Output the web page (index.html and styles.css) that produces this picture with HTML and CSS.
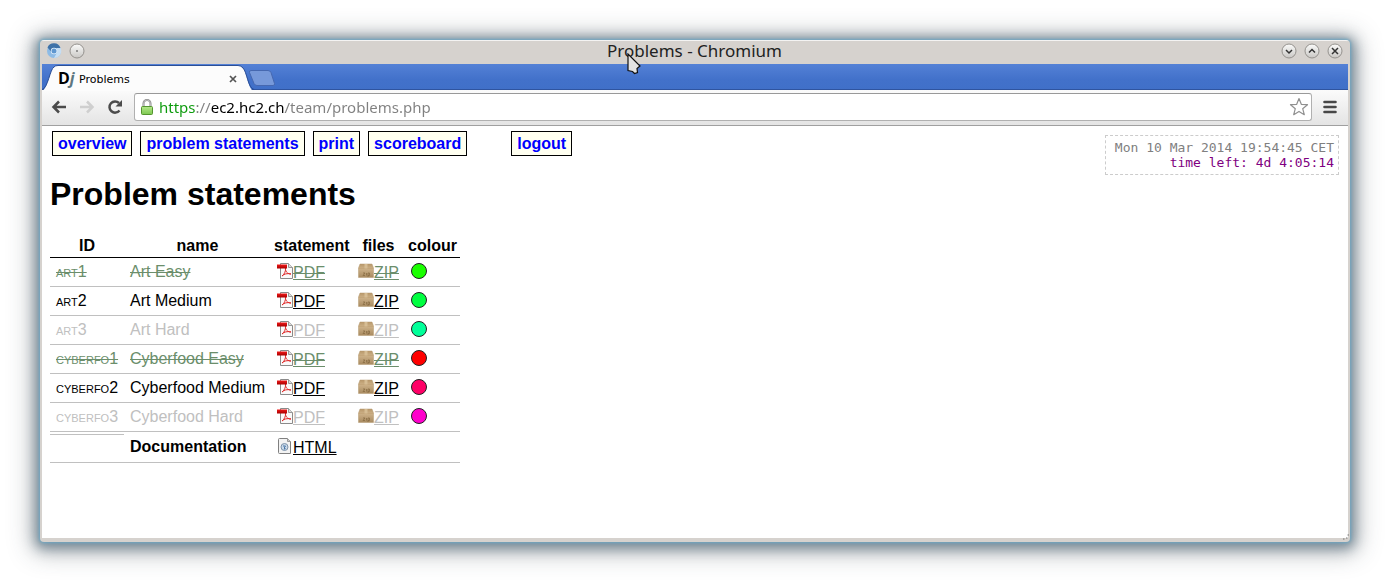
FILE: index.html
```html
<!DOCTYPE html>
<html lang="en">
<head>
<meta charset="utf-8">
<title>Problems</title>
<link rel="stylesheet" href="styles.css">
</head>
<body>
<svg class="defs" aria-hidden="true">
  <defs>
    <linearGradient id="knob" x1="0" y1="0" x2="0" y2="1"><stop offset="0" stop-color="#fbfbfa"/><stop offset="1" stop-color="#c9c7c4"/></linearGradient>
    <linearGradient id="red" x1="0" y1="0" x2="0" y2="1"><stop offset="0" stop-color="#f01818"/><stop offset="1" stop-color="#a80000"/></linearGradient>
    <linearGradient id="box" x1="0" y1="0" x2="0" y2="1"><stop offset="0" stop-color="#b8986a"/><stop offset=".35" stop-color="#cdb188"/><stop offset="1" stop-color="#a88a60"/></linearGradient>
    <linearGradient id="lock" x1="0" y1="0" x2="0" y2="1"><stop offset="0" stop-color="#b5e88a"/><stop offset="1" stop-color="#7cc850"/></linearGradient>
    <symbol id="pdf" viewBox="0 0 16 16">
      <path d="M3.500.5h8l4 4v11h-12z" fill="#fafafa" stroke="#8a8a8a"/>
      <path d="M11.500.5v4h4" fill="#ddd" stroke="#999"/>
      <path d="M5 13c2-1 4-5 3.500-8M8.500 7c1 3 3 4 5.500 4M5 13c2-2 5-3 9-2" fill="none" stroke="#e02a2a"/>
      <path d="M0 1.500h10v4H0z" fill="url(#red)"/>
    </symbol>
    <symbol id="zip" viewBox="0 0 16 16">
      <path d="M2 1h12l1.500 4v9.500H.500V5z" fill="url(#box)" stroke="#b59a70" stroke-width=".5"/>
      <path d="M.8 5.500h14.500" stroke="#c0a276" stroke-width=".7"/>
      <path d="M6.500 1h3v4.500h-3z" fill="#d6bd94"/>
      <path d="M5 10h2l-2 2.500h2M8.500 10v2.500M10 14v-4h1.500v2.500H10" fill="none" stroke="#84683f" stroke-width=".7"/>
    </symbol>
    <symbol id="html" viewBox="0 0 16 16">
      <path d="M2.500.5h8l3 3v12h-11q-1 0-1-1v-13q0-1 1-1z" fill="#f3f3f3" stroke="#808080"/>
      <path d="M10.500.5v3h3" fill="#ccc" stroke="#999"/>
      <circle cx="7.500" cy="9" r="3.500" fill="#c9d9ea" stroke="#7d93aa"/>
      <path d="M6 8h2.500L7.500 9.500l1 1M7.500 9v2.500" fill="none" stroke="#4a76a5"/>
    </symbol>
  </defs>
</svg>

<div class="window">
  <header class="titlebar">
    <div class="controls">
      <svg width="16" height="16" viewBox="0 0 16 16" aria-hidden="true"><circle cx="8" cy="8" r="7" fill="#8dbbe6"/><path d="M1.500 4.500A7 7 0 0 1 14.500 5H8a3 3 0 0 0-2.500 4z" fill="#3f72a8"/><path d="M14.600 5A7 7 0 0 1 8 15l3-5.500V5z" fill="#c5def4"/><circle cx="8" cy="8" r="3.200" fill="#e9f3fc"/><circle cx="8" cy="8" r="2.500" fill="#5f97d0"/></svg>
      <button class="knob" aria-label="On all desktops"><svg width="16" height="16" viewBox="0 0 16 16"><circle cx="8" cy="8" r="7" fill="url(#knob)" stroke="#95928e"/><circle cx="8" cy="8" r=".8" fill="#333"/></svg></button>
    </div>
    <div class="title">Problems - Chromium
      <svg class="pointer" width="14" height="22" viewBox="0 0 14 22" aria-hidden="true"><path d="M1 1v16.500l4.500 1 2 2 3-1-.500-4 3-2.500z" fill="#e4e4e4" stroke="#111" stroke-width="1.200"/></svg>
    </div>
    <div class="controls controls-right">
      <button class="knob" aria-label="Minimize"><svg width="16" height="16" viewBox="0 0 16 16"><circle cx="8" cy="8" r="7" fill="url(#knob)" stroke="#95928e"/><path d="M5 7l3 3 3-3" fill="none" stroke="#333" stroke-width="1.500"/></svg></button>
      <button class="knob" aria-label="Maximize"><svg width="16" height="16" viewBox="0 0 16 16"><circle cx="8" cy="8" r="7" fill="url(#knob)" stroke="#95928e"/><path d="M5 9.500l3-3 3 3" fill="none" stroke="#333" stroke-width="1.500"/></svg></button>
      <button class="knob" aria-label="Close"><svg width="16" height="16" viewBox="0 0 16 16"><circle cx="8" cy="8" r="7" fill="url(#knob)" stroke="#95928e"/><path d="M5 5l6 6M11 5l-6 6" stroke="#333" stroke-width="1.500"/></svg></button>
    </div>
  </header>

  <div class="tabs">
    <div class="tab">
      <svg class="tab-shape" width="212" height="26" viewBox="0 0 212 26" aria-hidden="true"><path d="M0 26C6 24 8 4 12 2Q13 .5 16 .5H196Q199 .5 201 3C205 7 206 25 212 26z" fill="#fcfcfc"/><path d="M0 24.500C6 23 8 4 12 2Q13 .5 16 .5H196Q199 .5 201 3C205 7 206 23 212 24.500" fill="none" stroke="#2c4f96"/></svg>
      <span class="favicon">D<i>j</i></span>
      <span class="tab-name">Problems</span>
      <button class="tab-close" aria-label="Close tab"><svg width="8" height="8" viewBox="0 0 8 8"><path d="M1 1l6 6M7 1L1 7" stroke="#555" stroke-width="1.700"/></svg></button>
    </div>
    <button class="new-tab" aria-label="New tab"><svg width="28" height="16" viewBox="0 0 28 16"><path d="M3 .5h17q2 0 3 2l3.500 11q.5 2-1.500 2H9q-2 0-3-2L1.500 2.500Q1 .5 3 .5z" fill="#7799da" stroke="#4668b0"/></svg></button>
  </div>

  <div class="toolbar">
    <button class="tool" aria-label="Back"><svg width="16" height="16" viewBox="0 0 16 16"><path d="M15 8H3M8 2.500L2.500 8 8 13.500" fill="none" stroke="#4b4b4b" stroke-width="2.500"/></svg></button>
    <button class="tool" aria-label="Forward" disabled><svg width="16" height="16" viewBox="0 0 16 16"><path d="M1 8h12M8 2.500L13.500 8 8 13.500" fill="none" stroke="#cfcfcf" stroke-width="2.500"/></svg></button>
    <button class="tool" aria-label="Reload"><svg width="16" height="16" viewBox="0 0 16 16"><path d="M12.500 11.500A5.600 5.600 0 1 1 12 4" fill="none" stroke="#4b4b4b" stroke-width="2.500"/><path d="M15 1v6.500H8.500z" fill="#4b4b4b"/></svg></button>
    <div class="address">
      <svg width="12" height="16" viewBox="0 0 12 16" aria-hidden="true"><path d="M2.500 8V4.500a3.500 3.500 0 0 1 7 0V8" fill="none" stroke="#888" stroke-width="2"/><path d="M2.500 8V4.500a3.500 3.500 0 0 1 7 0V8" fill="none" stroke="#ddd" stroke-width=".6"/><rect x=".5" y="7.500" width="11" height="8" rx="1" fill="url(#lock)" stroke="#54942f"/></svg>
      <input class="url" type="text" aria-label="Address" value="https://ec2.hc2.ch/team/problems.php">
      <button class="star" aria-label="Bookmark this page"><svg width="20" height="20" viewBox="0 0 20 20"><path d="M10 1.500l2.300 5.800 6.200.4-4.800 4 1.600 6L10 14.400l-5.300 3.300 1.600-6-4.800-4 6.200-.4z" fill="#fff" stroke="#909090" stroke-width="1.200" stroke-linejoin="round"/></svg></button>
    </div>
    <button class="tool menu" aria-label="Menu"><svg width="14" height="14" viewBox="0 0 14 14"><path d="M1.500 2h11M1.500 7h11M1.500 12h11" stroke="#484848" stroke-width="2.600" stroke-linecap="round"/></svg></button>
  </div>

  <main class="page">
    <div class="top">
      <nav class="nav">
        <a href="#">overview</a>
        <a href="#">problem statements</a>
        <a href="#">print</a>
        <a href="#">scoreboard</a>
        <a class="logout" href="#">logout</a>
      </nav>
      <div class="clock">Mon 10 Mar 2014 19:54:45 CET<br><span class="left">time left: 4d 4:05:14</span></div>
    </div>
    <h1>Problem statements</h1>
    <table class="problems">
      <colgroup><col class="c-id"><col class="c-name"><col class="c-statement"><col class="c-files"><col class="c-colour"></colgroup>
      <thead><tr><th>ID</th><th>name</th><th>statement</th><th>files</th><th>colour</th></tr></thead>
      <tbody>
        <tr class="solved"><td class="id">art1</td><td>Art Easy</td><td><svg class="icon"><use href="#pdf"/></svg><a href="#">PDF</a></td><td><svg class="icon"><use href="#zip"/></svg><a href="#">ZIP</a></td><td><span class="dot green"></span></td></tr>
        <tr><td class="id">art2</td><td>Art Medium</td><td><svg class="icon"><use href="#pdf"/></svg><a href="#">PDF</a></td><td><svg class="icon"><use href="#zip"/></svg><a href="#">ZIP</a></td><td><span class="dot emerald"></span></td></tr>
        <tr class="locked"><td class="id">art3</td><td>Art Hard</td><td><svg class="icon"><use href="#pdf"/></svg><a href="#">PDF</a></td><td><svg class="icon"><use href="#zip"/></svg><a href="#">ZIP</a></td><td><span class="dot mint"></span></td></tr>
        <tr class="solved"><td class="id">cyberfo1</td><td>Cyberfood Easy</td><td><svg class="icon"><use href="#pdf"/></svg><a href="#">PDF</a></td><td><svg class="icon"><use href="#zip"/></svg><a href="#">ZIP</a></td><td><span class="dot red"></span></td></tr>
        <tr><td class="id">cyberfo2</td><td>Cyberfood Medium</td><td><svg class="icon"><use href="#pdf"/></svg><a href="#">PDF</a></td><td><svg class="icon"><use href="#zip"/></svg><a href="#">ZIP</a></td><td><span class="dot rose"></span></td></tr>
        <tr class="locked"><td class="id">cyberfo3</td><td>Cyberfood Hard</td><td><svg class="icon"><use href="#pdf"/></svg><a href="#">PDF</a></td><td><svg class="icon"><use href="#zip"/></svg><a href="#">ZIP</a></td><td><span class="dot magenta"></span></td></tr>
        <tr class="docs"><td class="blank"><div class="rule"></div></td><td><b>Documentation</b></td><td><svg class="icon"><use href="#html"/></svg><a href="#">HTML</a></td><td></td><td></td></tr>
      </tbody>
    </table>
    <svg class="grip" width="8" height="8" viewBox="0 0 8 8" aria-hidden="true"><path d="M1 6h1.500M4 5h1.500M5.500 2H7" stroke="#777" stroke-width="1.200"/></svg>
  </main>
</div>
</body>
</html>
```
FILE: styles.css
```css
* { box-sizing: border-box; }

body {
  margin: 0;
  min-height: 100vh;
  padding: 40px;
  display: flex;
  background: #fff;
  font: 16px/18px "Liberation Sans", Arial, sans-serif;
  color: #000;
}

button {
  border: 0;
  padding: 0;
  background: none;
  display: flex;
}

.defs { position: absolute; width: 0; height: 0; }

.window {
  flex: 1;
  min-width: 0;
  display: flex;
  flex-direction: column;
  background: #d6d2ce;
  border: 2px solid #d6d2ce;
  border-top: 1px solid #f4f3f2;
  border-bottom-width: 4px;
  border-radius: 4px;
  box-shadow: 0 0 3px 1px #6ea8c5, 0 2px 12px 5px rgba(50, 80, 100, 0.5), 0 3px 24px 8px rgba(50, 60, 70, 0.35);
}

.titlebar {
  height: 23px;
  display: grid;
  grid-template-columns: 1fr auto 1fr;
  align-items: center;
  padding: 0 5px 0 4px;
}

.controls { display: flex; gap: 7px; padding-bottom: 4px; }
.controls-right { justify-content: flex-end; }

.title {
  position: relative;
  padding-bottom: 3px;
  font: 17px/20px "Noto Sans", "Open Sans", sans-serif;
  color: #222;
}

.pointer { position: absolute; left: 20px; top: 12px; }

.tabs {
  height: 26px;
  display: flex;
  align-items: flex-start;
  background: linear-gradient(#5481d6, #4271ca 60%, #4070c8);
  box-shadow: inset 0 -1px #2f549f;
}

.tab {
  position: relative;
  width: 212px;
  height: 26px;
  display: flex;
  align-items: center;
  padding: 2px 17px 0 16px;
}

.tab-shape { position: absolute; left: 0; top: 1px; }
.favicon, .tab-name, .tab-close { position: relative; }
.tab-close { padding-top: 2px; }
.favicon { width: 21px; font: bold 16px/20px "Open Sans", sans-serif; }
.favicon i { color: #5d7680; }
.tab-name { flex: 1; padding-top: 3px; font: 11px/16px "DejaVu Sans", sans-serif; }
.new-tab { padding-top: 6px; margin-left: -6px; }

.toolbar {
  height: 36px;
  display: flex;
  align-items: center;
  gap: 11px;
  padding: 0 11px 1px 9px;
  background: linear-gradient(#fbfbfb, #e4e4e4);
  border-bottom: 1px solid #a0a0a0;
}

.toolbar .tool + .tool { margin-left: 1px; }

.address {
  flex: 1;
  min-width: 0;
  height: 28px;
  display: flex;
  align-items: center;
  gap: 6px;
  padding: 0 2px 0 6px;
  background: #fff;
  border: 1px solid #b0b0b0;
  border-top-color: #999;
  border-radius: 3px;
}

.url {
  flex: 1;
  min-width: 0;
  border: 0;
  padding: 0;
  font: 15px/24px "Noto Sans", "Open Sans", sans-serif;
  color: transparent;
  background: linear-gradient(90deg, #0a9a0a 37px, #808080 37px, #808080 52px, #000 52px, #000 126px, #808080 126px);
  background-clip: text;
  -webkit-background-clip: text;
}

.page {
  flex: 1;
  position: relative;
  padding: 5px 8px 8px;
  background: #fff;
}

.top {
  display: flex;
  justify-content: space-between;
  align-items: flex-start;
}

.nav { display: flex; gap: 8px; padding-left: 2px; }

.nav a {
  padding: 3px 5px 2px;
  border: 1px solid #000;
  background: #fffff0;
  color: #00f;
  font-weight: bold;
  text-decoration: none;
}

.nav .logout { margin-left: 36px; }

.clock {
  min-width: 234px;
  margin: 4px 1px 0 0;
  padding: 4px;
  border: 1px dashed #ccc;
  font: 13px/15px "DejaVu Sans Mono", monospace;
  color: #808080;
  text-align: right;
}

.left { color: #800080; }

h1 { margin: 1px 0 23px; font-size: 32px; line-height: 36px; }

.problems {
  width: 410px;
  table-layout: fixed;
  border-collapse: collapse;
}

.c-id { width: 74px; }
.c-name { width: 147px; }
.c-statement { width: 81px; }
.c-files { width: 53px; }
.c-colour { width: 55px; }

th { padding: 2px 3px; border-bottom: 1px solid #000; }

td {
  height: 29px;
  padding: 0 6px;
  border-bottom: 1px solid #c0c0c0;
  white-space: nowrap;
}

.id { font-variant: small-caps; }
td a { color: inherit; }
.icon { width: 16px; height: 16px; vertical-align: -1px; }

.solved td { color: #6b8e6b; text-decoration: line-through; }
.solved a { text-decoration: underline line-through; }
.locked td { color: #c0c0c0; }

.dot {
  display: block;
  width: 16px;
  height: 16px;
  margin-bottom: 3px;
  border: 1px solid #222;
  border-radius: 50%;
}

.green { background: #1aff00; }
.emerald { background: #00ff40; }
.mint { background: #00ff99; }
.red { background: #f00; }
.rose { background: #ff0066; }
.magenta { background: #ff00cc; }

.docs td { height: 31px; }
.docs .blank { padding: 0; vertical-align: top; }
.rule { height: 3px; border-bottom: 1px solid #c0c0c0; }

.grip { position: absolute; right: -2px; bottom: -3px; }
```
